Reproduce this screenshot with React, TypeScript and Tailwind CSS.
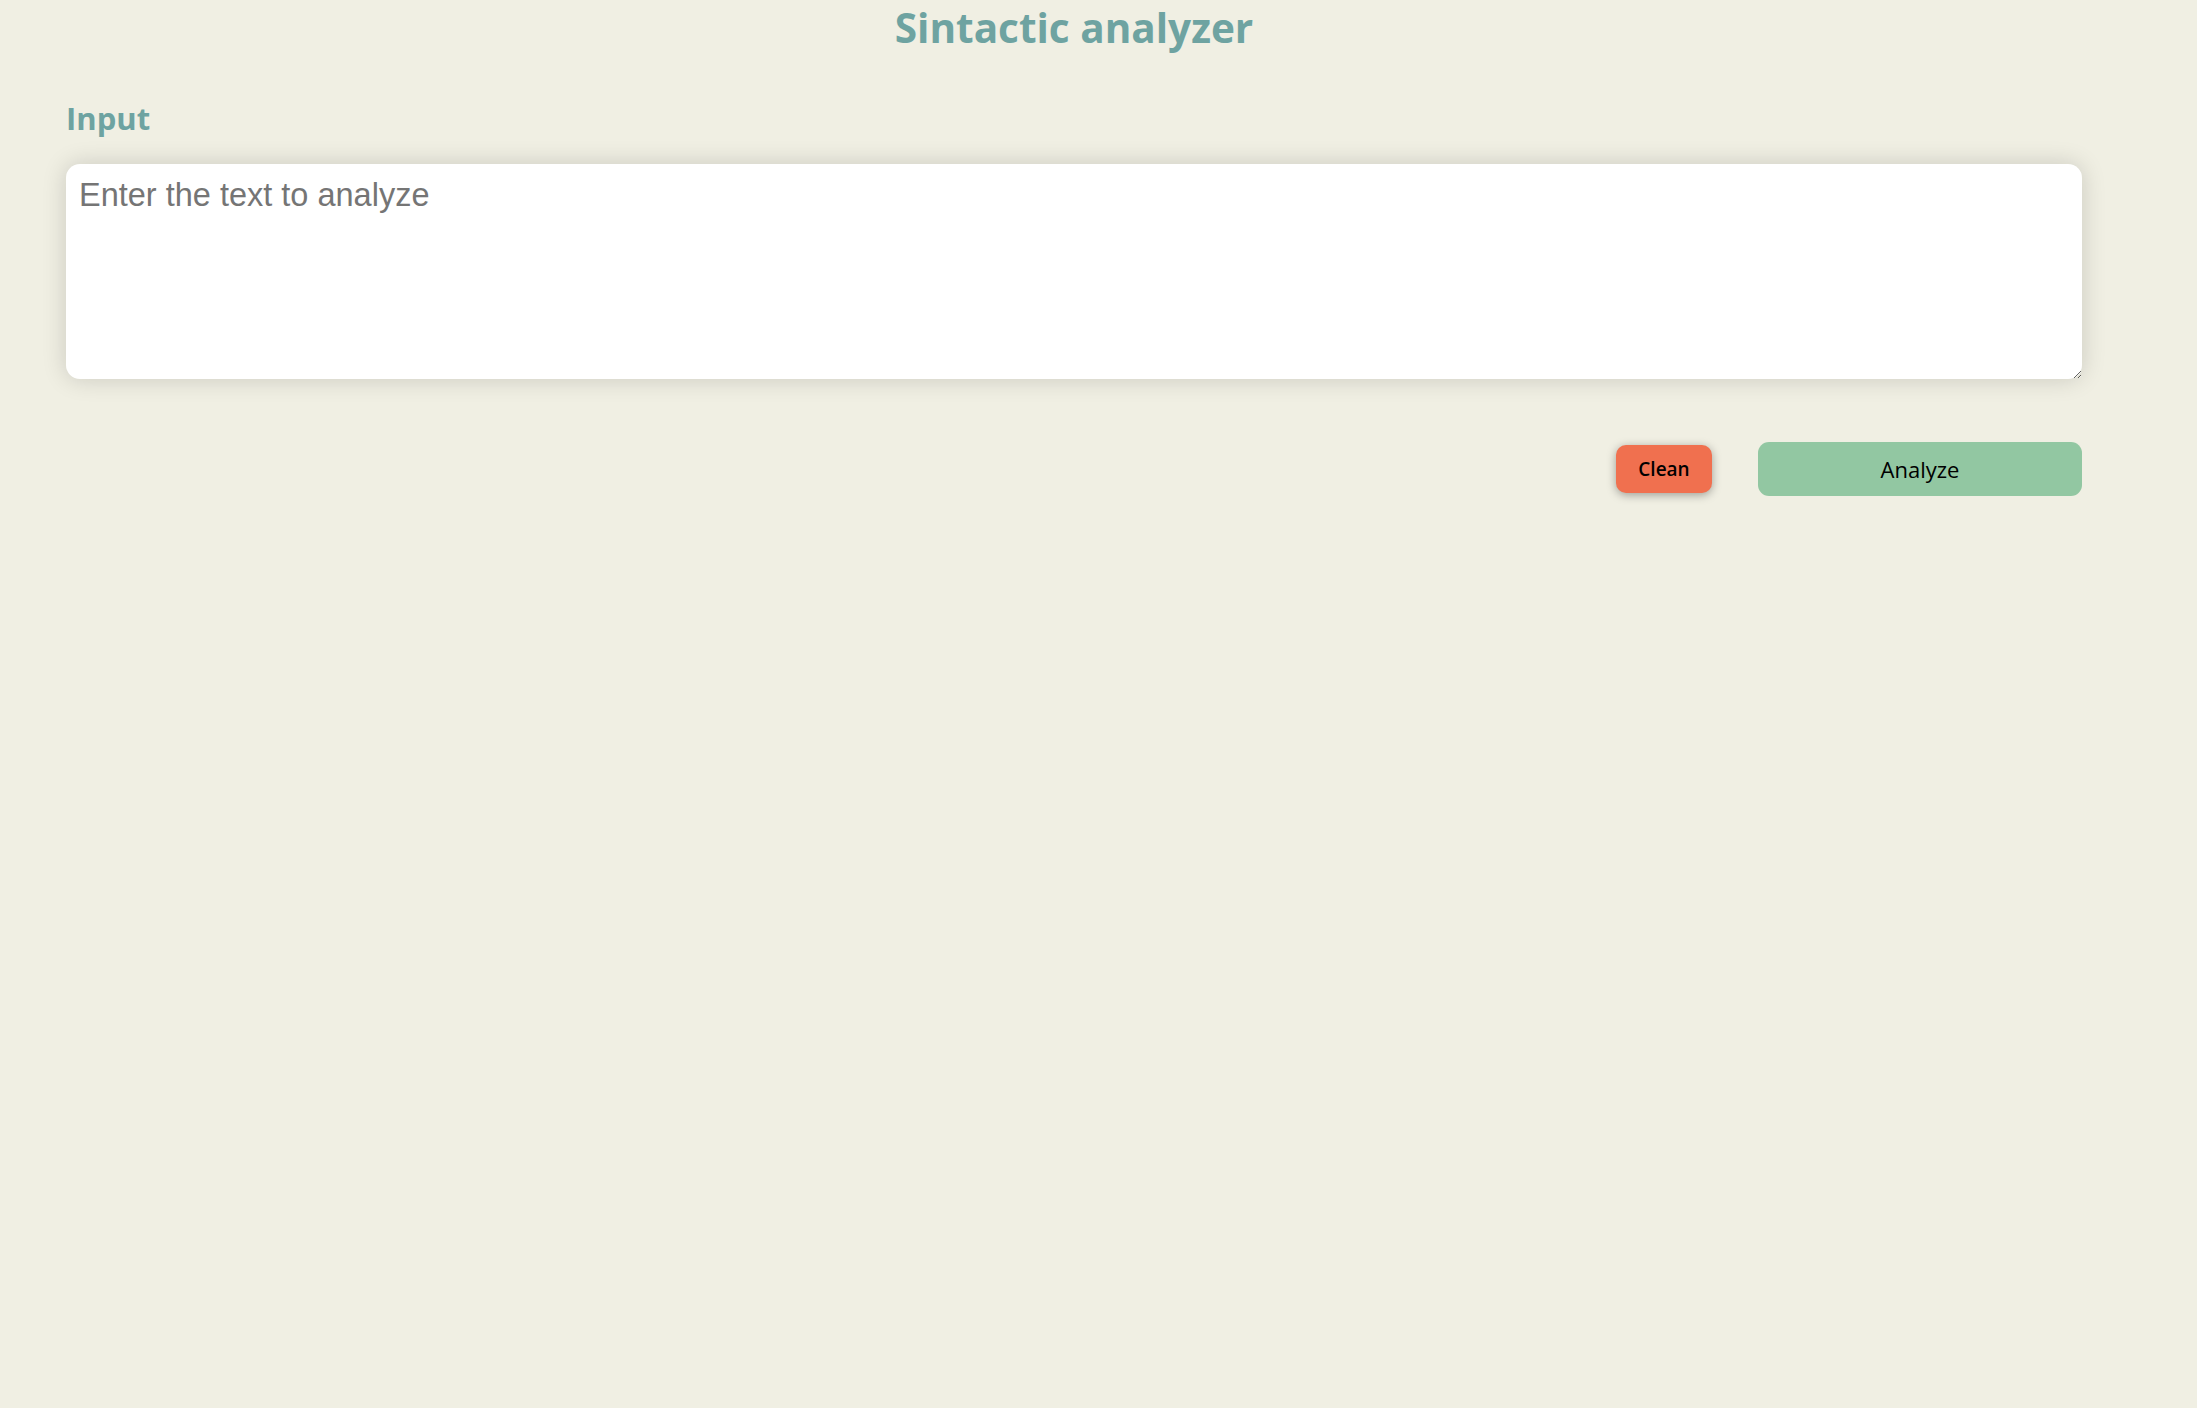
import { useState, type JSX } from 'react';

const App = (): JSX.Element => {
  const [text, setText] = useState<string>('');

  return (
    <div className="min-h-[1408px] w-full bg-[#f0efe3] font-['Open_Sans',sans-serif]">
      <div className="ml-[66px] flex w-[2016px] flex-col">
        <h1 className="text-center text-[40.5px] leading-[56px] font-bold text-[#6ea3a1]">
          Sintactic analyzer
        </h1>
        <h2 className="mt-[42px] text-[31px] leading-[40px] font-bold text-[#6ea3a1]">
          Input
        </h2>
        <textarea
          value={text}
          onChange={(e) => setText(e.target.value)}
          placeholder="Enter the text to analyze"
          className="mt-[26px] h-[215px] w-full rounded-[14px] bg-white px-[13px] pt-[11px] pb-[8px] font-['Liberation_Sans',Arial,sans-serif] text-[32.5px] leading-[40px] text-black shadow-[0_0_24px_rgba(0,0,0,0.16)] outline-none placeholder:text-[#757575]"
        />
        <div className="mt-[63px] flex items-center justify-end gap-[46px]">
          <button
            type="button"
            onClick={() => setText('')}
            className="h-[48px] w-[96px] cursor-pointer rounded-[10px] bg-[#f0704f] text-[19px] font-semibold text-black shadow-[0_2px_10px_rgba(0,0,0,0.35)]"
          >
            Clean
          </button>
          <button
            type="button"
            className="h-[54px] w-[324px] cursor-pointer rounded-[11px] bg-[#92c7a2] text-[22px] font-medium text-black"
          >
            Analyze
          </button>
        </div>
      </div>
    </div>
  );
};

export default App;
